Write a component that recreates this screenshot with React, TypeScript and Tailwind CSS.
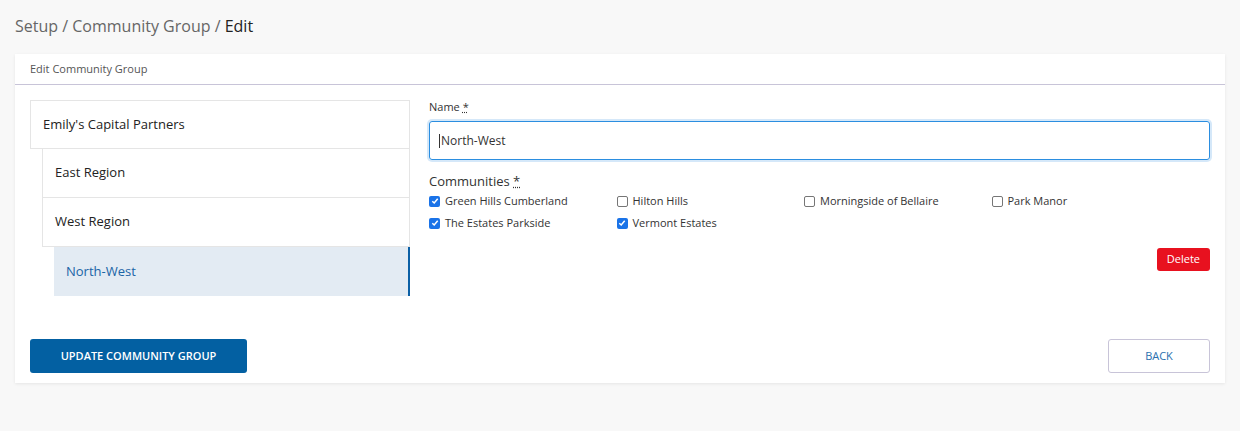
import React from "react";

const communities = [
    { label: "Green Hills Cumberland", checked: true },
    { label: "Hilton Hills", checked: false },
    { label: "Morningside of Bellaire", checked: false },
    { label: "Park Manor", checked: false },
    { label: "The Estates Parkside", checked: true },
    { label: "Vermont Estates", checked: true },
];

const font = { fontFamily: "'Open Sans', 'Liberation Sans', sans-serif" };

function Check({ checked }: { checked: boolean }) {
    if (checked) {
        return (
            <span className="w-[11px] h-[11px] rounded-[2px] bg-[#1a73e8] flex items-center justify-center shrink-0">
                <svg width="8" height="8" viewBox="0 0 8 8">
                    <path d="M1.3 4.2 L3.2 6 L6.7 1.8" stroke="white" strokeWidth="1.5" fill="none" />
                </svg>
            </span>
        );
    }
    return <span className="w-[11px] h-[11px] rounded-[2px] border border-[#767676] bg-white shrink-0" />;
}

export default function App() {
    return (
        <div className="min-h-[431px] bg-[#f8f8f8] text-[#222]" style={font}>
            <div className="px-[15px] pt-[14px] pb-[16px]">
                <h1 className="text-[16px] leading-[24px] text-[#666]">
                    Setup / Community Group / <span className="text-[#222]">Edit</span>
                </h1>
            </div>
            <div className="mx-[15px] bg-white shadow-[0_1px_3px_rgba(0,0,0,0.08)]">
                {/* Header */}
                <div className="h-[31px] px-[15px] flex items-center border-b border-[#c8c4d8] text-[11px] text-[#555]">
                    Edit Community Group
                </div>
                <div className="flex px-[15px] pt-[15px] gap-[19px]">
                    {/* Tree */}
                    <div className="w-[380px] shrink-0">
                        <div className="h-[49px] flex items-center px-[12px] border border-[#e5e5e5] text-[13px] text-[#222]">
                            Emily's Capital Partners
                        </div>
                        <div className="ml-[12px]">
                            <div className="h-[49px] flex items-center px-[12px] border border-t-0 border-[#e5e5e5] text-[13px]">
                                East Region
                            </div>
                            <div className="h-[49px] flex items-center px-[12px] border border-t-0 border-[#e5e5e5] text-[13px]">
                                West Region
                            </div>
                            <div className="ml-[12px] h-[49px] flex items-center px-[12px] bg-[#e3ebf3] border-r-2 border-[#0b5fa5] text-[13px] text-[#1a64a6]">
                                North-West
                            </div>
                        </div>
                    </div>
                    {/* Form */}
                    <div className="flex-1">
                        <label className="block text-[11px] leading-[14px] text-[#333]">
                            Name <span className="underline decoration-dotted">*</span>
                        </label>
                        <div className="mt-[7px] h-[39px] border border-[#2b8ee0] rounded-[3px] shadow-[0_0_0_2px_rgba(43,142,224,0.2)] flex items-center px-[9px] text-[12px] text-[#333]">
                            <span className="w-px h-[14px] bg-[#333] mr-[1px]" />
                            North-West
                        </div>
                        <div className="mt-[13px] text-[13px] leading-[16px] text-[#333]">
                            Communities <span className="underline decoration-dotted">*</span>
                        </div>
                        <div className="mt-[4px] grid grid-cols-[repeat(4,187.5px)] gap-y-[6px]">
                            {communities.map((c) => (
                                <div key={c.label} className="flex items-center gap-[5px] h-[16px] text-[11px] text-[#333]">
                                    <Check checked={c.checked} />
                                    {c.label}
                                </div>
                            ))}
                        </div>
                        <div className="flex justify-end mt-[17px]">
                            <button className="h-[23px] px-[10px] rounded-[3px] bg-[#e8111f] text-white text-[11px] font-medium">
                                Delete
                            </button>
                        </div>
                    </div>
                </div>
                {/* Footer */}
                <div className="flex justify-between items-center px-[15px] pt-[43px] pb-[10px]">
                    <button className="w-[217px] h-[34px] rounded-[3px] bg-[#0360a2] text-white text-[11px] font-semibold uppercase">
                        Update Community Group
                    </button>
                    <button className="w-[102px] h-[34px] rounded-[3px] border border-[#c8c4d8] bg-white text-[#2a6fae] text-[11px] uppercase">
                        Back
                    </button>
                </div>
            </div>
        </div>
    );
}
